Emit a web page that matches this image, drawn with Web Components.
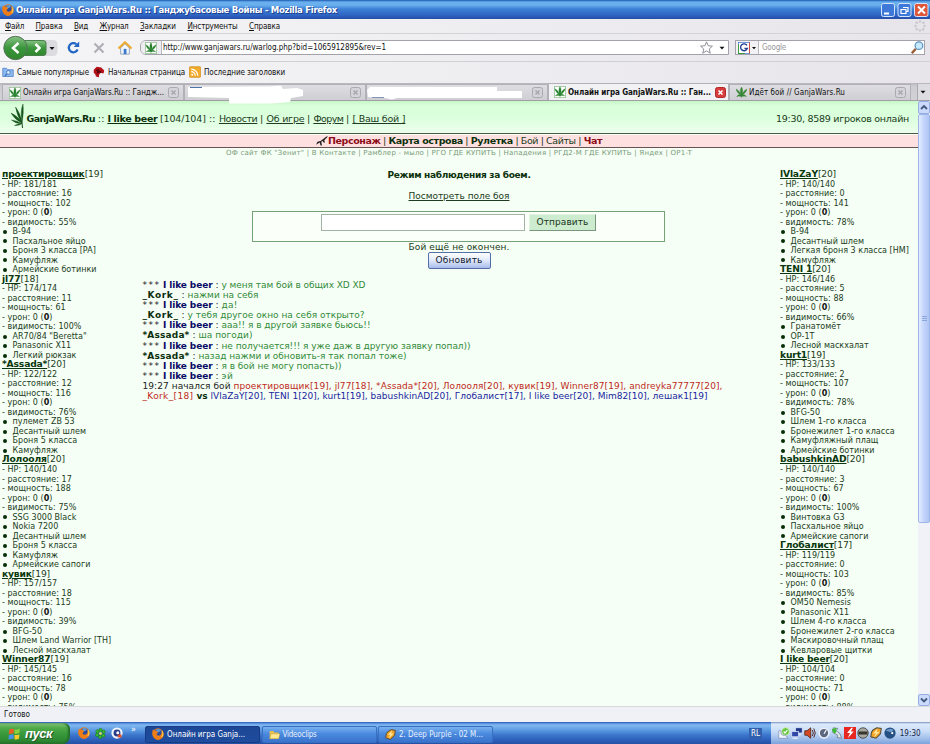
<!DOCTYPE html>
<html lang="ru">
<head>
<meta charset="utf-8">
<title>Онлайн игра GanjaWars.Ru :: Ганджубасовые Войны</title>
<style>
html, body { margin: 0; width: 930px; height: 744px; overflow: hidden; }
body { font-family: "DejaVu Sans Condensed", "DejaVu Sans", sans-serif; font-size: 8px; color: #111; }
</style>
</head>
<body>
<browser-window>
    <title-bar slot="top"></title-bar>
    <menu-bar slot="top"></menu-bar>
    <nav-bar slot="top"></nav-bar>
    <bookmark-bar slot="top"></bookmark-bar>
    <tab-bar slot="top"></tab-bar>
    <game-page></game-page>
    <scroll-bar slot="scroll"></scroll-bar>
    <status-bar slot="bottom">Готово</status-bar>
    <task-bar slot="bottom"></task-bar>
</browser-window>

<script>
const LEAF = '<path d="M8 14C5 13 3 13 1 14C3 11 5 11 7 12C4 10 1 7 0 3C4 5 6 8 7 11C6 7 6 3 8 0C10 3 10 7 9 11C10 8 12 5 16 3C15 7 12 10 9 12C11 11 13 11 15 14C13 13 11 13 8 14V16"/>';

// all on a 16x16 grid
const ICONS = {
    fox: '<circle cx="8" cy="8" r="7.6" fill="#e8791c"/><circle cx="8.6" cy="6.6" r="5" fill="#2b4d9c"/><path d="M6 2Q9 0 12 3L10 5Q7 5 6 7z" fill="#5d9bd8"/><path d="M0.5 6L1 2L4 4Q7 3 8 6L6 8Q7 11 10 10Q13 9 13 4Q16 7 15 11Q12 16 7 15.6Q1 14 .5 6z" fill="#ee7d18"/><path d="M13 4Q16 8 13 12" stroke="#ffd04a" stroke-width="1.4" fill="none"/>',
    favicon: '<rect width="16" height="16" fill="#fff"/><rect x=".5" y=".5" width="15" height="15" fill="none" stroke="#8dbd8d"/><g fill="#24802b" stroke="#24802b" stroke-width=".6" transform="translate(1 1) scale(.87)">' + LEAF + '</g>',
    leaf: '<g fill="#348533" stroke="#348533" stroke-width=".6">' + LEAF + '</g>',
    reload: '<path d="M13 10.5A5.6 5.6 0 1 1 11.5 4" fill="none" stroke="#2166c4" stroke-width="2.8"/><path d="M8.2 7.3H15V.6z" fill="#2166c4"/>',
    stop: '<path d="M2 2L14 14M14 2L2 14" stroke="#aeaeb4" stroke-width="2.8"/>',
    home: '<path d="M3 8V15H13V8L8 3z" fill="#f3f6fb" stroke="#8b9cb4"/><path d="M.5 8.5L8 1.5L15.500 8.5" fill="none" stroke="#eda92c" stroke-width="2.4"/><rect x="6.500" y="9" width="3.2" height="6" fill="#3d79c9"/>',
    star: '<path d="M8 1L10.100 5.900L15.300 6.300L11.400 9.800L12.600 15L8 12.200L3.400 15L4.600 9.800L.7 6.300L5.900 5.900z" fill="#fff" stroke="#8c8c96" stroke-width="1.200"/>',
    google: '<rect x=".5" y=".5" width="15" height="15" fill="#fff" stroke="#4379d4"/><path d="M.5 3V15.500H9" stroke="#3c9a3c" fill="none" stroke-width="1.500"/><path d="M15.500 .5V15" stroke="#d54637" stroke-width="1.500"/><path d="M12 4.600A4.600 4.600 0 1 0 12.400 8.700H8.600" fill="none" stroke="#243e91" stroke-width="1.800"/>',
    lens: '<path d="M1 15L6 9.500" stroke="#9a5d36" stroke-width="3"/><circle cx="9.800" cy="5.700" r="4.700" fill="#c5e8fb" stroke="#5f93c0" stroke-width="1.500"/>',
    popular: '<path d="M1 3H6L8 5H15V14H1z" fill="#8db9ef" stroke="#4a7cc4"/><circle cx="8.500" cy="8.500" r="2.500" fill="#d9ecff" stroke="#3469b7"/><path d="M6.500 10.500L4 13" stroke="#3469b7" stroke-width="1.500"/>',
    dragon: '<path d="M1 5L5 1L11 2L15 6L14 10L10 9L8 12V15L4 14L3 11L1 9z" fill="#b51018"/><path d="M4 6L7 5L6 9L9 7L11 9" fill="none" stroke="#4d0509" stroke-width="1.500"/>',
    rss: '<rect x=".5" y="1" width="15" height="14" rx="1" fill="#f2ac2b" stroke="#d18e18"/><circle cx="4.300" cy="11.600" r="1.300" fill="#fff"/><path d="M3 7.600A5.200 5.200 0 0 1 8.300 13M3 4.200A8.700 8.700 0 0 1 11.700 13" stroke="#fff" fill="none" stroke-width="1.600"/>',
    windows: '<g transform="skewY(-8) translate(0 1.500)"><path d="M1.500 2Q4 .8 7 2V7.500Q4 6.500 1 7.500z" fill="#ee5b27"/><path d="M8 2.500Q11 4 14.500 2.500L14 8Q11 9 8 8z" fill="#8ccf3e"/><path d="M1 8.800Q4 7.700 7 8.800V14Q4 13 .6 14z" fill="#4a90ee"/><path d="M8 9.300Q11 10.500 14 9.300L13.500 15Q10 16 8 14.800z" fill="#fbc72e"/></g>',
    icq: '<g fill="#3bbb2d" stroke="#136c1c" stroke-width=".7"><circle cx="8" cy="3" r="2.500"/><circle cx="12.500" cy="5.500" r="2.500"/><circle cx="12" cy="11" r="2.500"/><circle cx="7.500" cy="13" r="2.500"/><circle cx="3.200" cy="10" r="2.500"/><circle cx="3.600" cy="5" r="2.500"/></g><circle cx="8" cy="8" r="1.800" fill="#f1ea58"/>',
    agent: '<circle cx="8" cy="8" r="7.500" fill="#eef3fc"/><circle cx="8" cy="8" r="4.600" fill="#253d86"/><circle cx="9" cy="7.500" r="2" fill="#fff"/><rect x="9" y="10" width="5" height="4" fill="#db4d2f"/>',
    folder: '<path d="M1 3H6L8 5H14V14H1z" fill="#e8c14c"/><path d="M3 7H16L14 14H1z" fill="#ffe990" stroke="#b58a22" stroke-width=".6"/>',
    winamp: '<path d="M4 4L9 1L15 2L14 9L8 15L1 13L2 7z" fill="#f3a526" stroke="#554a38" stroke-width="1.400"/><path d="M10 2L4 9L8 8L5 14L13 6L9 7z" fill="#ffe9a6"/>',
    user: '<circle cx="10" cy="6" r="5.200" fill="#68c33e" stroke="#e9ffe0"/><path d="M7.500 6L9.500 8L12.500 4" fill="none" stroke="#fff" stroke-width="1.600"/><path d="M1 5H4V9L6 11L10 11L13 15H1z" fill="#f2f6ff" stroke="#61719b" stroke-width=".7"/>',
    network: '<rect x="6" y="1" width="9" height="7" fill="#24388b" stroke="#dfe8fa"/><path d="M8 10H13" stroke="#dfe8fa" stroke-width="2"/><rect x="1" y="6" width="9" height="7" fill="#3049a8" stroke="#dfe8fa"/><path d="M2 15H9" stroke="#dfe8fa" stroke-width="2"/>',
    sound: '<path d="M1 5H4L9 1V15L4 11H1z" fill="#d44a24" stroke="#491d13"/><path d="M11 4Q14 8 11 12M13 2Q17 8 13 14" fill="none" stroke="#482528" stroke-width="1.300"/>',
    dial: '<circle cx="8" cy="8" r="6.500" fill="#5c6780" stroke="#edf1f8" stroke-width="2"/><path d="M8 9L11 4" stroke="#fff" stroke-width="1.600"/>',
    eject: '<path d="M3 1L9 2L7 5L12 9L14 15L8 14L9 11L2 7z" fill="#dfe7e6" stroke="#657583"/><path d="M1 3L7 1L7 7L4 9z" fill="#3ebc34"/>',
    flash: '<rect width="16" height="16" fill="#e62722"/><path d="M10 1L4 8H8L5 15L13 6H9L12 1z" fill="#fff"/>',
    disc: '<circle cx="8" cy="8" r="7" fill="#a9a89f" stroke="#33332f"/><rect x="2" y="6" width="12" height="4" fill="#37352c"/>',
    orb: '<circle cx="8" cy="8" r="7.500" fill="#255083"/><path d="M2 5Q8 0 13 4L10 7z" fill="#6f99c9"/><circle cx="11" cy="8" r="1.500" fill="#fff"/>',
    throbber: '<g fill="#c9c9cd"><circle cx="8" cy="2" r="1.700"/><circle cx="12.500" cy="3.700" r="1.700"/><circle cx="14" cy="8" r="1.700"/><circle cx="12.300" cy="12.500" r="1.700"/><circle cx="8" cy="14" r="1.700"/><circle cx="3.600" cy="12.400" r="1.700"/><circle cx="2" cy="8" r="1.700"/><circle cx="3.600" cy="3.600" r="1.700"/></g>',
    drop: '<path d="M4 6H12L8 10.500z" fill="#111"/>',
    rifle: '<path d="M0 13L2 9L6 8L14 2L16 2L11 7L12 10L10 10L9 8L7 9L8 14L6 14L5 10z" fill="#222"/>'
};

class UiIcon extends HTMLElement {
    connectedCallback() {
        const size = this.getAttribute('size') || 12;
        const shadow = this.attachShadow({ mode: 'open' });
        shadow.innerHTML = `<style>
        :host { display: block; flex: none; width: ${size}px; height: ${size}px; }
        svg { display: block; }
        </style>
        <svg width="${size}" height="${size}" viewBox="0 0 16 16">${ICONS[this.getAttribute('name')]}</svg>`;
    }
}

class BrowserWindow extends HTMLElement {
    connectedCallback() {
        this.attachShadow({ mode: 'open' }).innerHTML = `<style>
        :host { display: flex; flex-direction: column; width: 930px; height: 744px; }
        .view { display: flex; flex: 1; min-height: 0; }
        </style>
        <slot name="top"></slot>
        <div class="view"><slot></slot><slot name="scroll"></slot></div>
        <slot name="bottom"></slot>`;
    }
}

class TitleBar extends HTMLElement {
    connectedCallback() {
        this.attachShadow({ mode: 'open' }).innerHTML = `<style>
        :host { display: flex; align-items: center; height: 19px; box-sizing: border-box; padding: 0 1px 0 2px; gap: 2px;
            background: linear-gradient(#1d58b0 0, #69b0ef 2px, #6bb0ee 5px, #3c80d6 9px, #2f65c4 15px, #254da7); color: #fff;
            font-size: 9.5px; font-weight: bold; text-shadow: 1px 1px #1c3d8c; }
        .space { flex: 1; }
        svg { display: block; }
        </style>
        <ui-icon name="fox" size="12"></ui-icon>
        <fit-text w="321">Онлайн игра GanjaWars.Ru :: Ганджубасовые Войны - Mozilla Firefox</fit-text>
        <div class="space"></div>
        <svg width="48" height="16">
            <g stroke="#d5e4fb"><rect x=".5" y="1.500" width="13" height="13" rx="2" fill="#3e79da"/><rect x="17" y="1.500" width="13" height="13" rx="2" fill="#3e79da"/><rect x="33.500" y="1.500" width="13.500" height="13" rx="2" fill="#df5638"/></g>
            <path d="M3 11.500H8" stroke="#fff" stroke-width="2"/>
            <path d="M22 5.500H27V9.500H25M20 7.500H25V11.500H20z" fill="none" stroke="#fff" stroke-width="1.200"/>
            <path d="M37 4.500L44 11.500M44 4.500L37 11.500" stroke="#fff" stroke-width="1.900"/>
        </svg>`;
    }
}

class MenuBar extends HTMLElement {
    connectedCallback() {
        const items = [['Файл', 19], ['Правка', 27], ['Вид', 14], ['Журнал', 29], ['Закладки', 36], ['Инструменты', 50], ['Справка', 31]];
        this.attachShadow({ mode: 'open' }).innerHTML = `<style>
        :host { display: flex; align-items: center; gap: 11.5px; height: 15px; box-sizing: border-box; padding: 0 4px 0 5px;
            background: linear-gradient(90deg, #f5f5f7, #e7e5ea); border-bottom: 1px solid #d4d3d8; }
        u { text-decoration-thickness: 1px; text-underline-offset: 1px; }
        .space { flex: 1; }
        </style>
        ${items.map(([t, w]) => `<fit-text w="${w}"><u>${t[0]}</u>${t.slice(1)}</fit-text>`).join('')}
        <div class="space"></div><ui-icon name="throbber" size="12"></ui-icon>`;
    }
}

class NavBar extends HTMLElement {
    connectedCallback() {
        this.attachShadow({ mode: 'open' }).innerHTML = `<style>
        :host { display: flex; align-items: center; height: 28px; box-sizing: border-box; padding: 0 5px 0 3px;
            background: linear-gradient(90deg, #f5f5f7, #e7e5ea); border-bottom: 1px solid #d0cfd4; }
        .arrows { display: block; flex: none; margin-right: 9px; }
        .field { display: flex; align-items: center; height: 15px; box-sizing: border-box; background: #fff; border: 1px solid #a3a2aa; }
        .url { width: 589px; border-radius: 6px 0 0 6px; margin-left: 8px; margin-right: 6px; overflow: hidden; }
        .site { display: flex; align-items: center; height: 13px; padding: 0 4px; margin-right: 1px; background: #ececf1; border-right: 1px solid #b9b8c0; }
        .search { width: 190px; color: #999; }
        .engine { display: flex; align-items: center; height: 13px; width: 20px; padding-left: 2px; margin-right: 3px; border-right: 1px solid #b9b8c0; background: #f2f2f5; }
        .space { flex: 1; }
        ui-icon + ui-icon.gap { margin-left: 13px; }
        </style>
        <svg class="arrows" width="55" height="26">
            <defs><linearGradient id="g" x2="0" y2="1"><stop stop-color="#87c284"/><stop offset=".5" stop-color="#3a953c"/><stop offset="1" stop-color="#31872d"/></linearGradient></defs>
            <path d="M12 5H50Q54.500 5 54.500 10V16Q54.500 21 50 21H12z" fill="#dcdbe0"/>
            <path d="M20 5.500H40Q43 5.500 43 8V18Q43 20.500 40 20.500H20z" fill="url(#g)" stroke="#46804a"/>
            <circle cx="12.500" cy="13" r="11.700" fill="url(#g)" stroke="#55735a"/>
            <path d="M15.500 8L10 13L15.500 18M32.500 9L36.500 13L32.500 17" fill="none" stroke="#fff" stroke-width="2.500"/>
            <path d="M46.500 12H51.500L49 15z" fill="#111"/>
        </svg>
        <ui-icon name="reload" size="13"></ui-icon>
        <ui-icon class="gap" name="stop" size="12"></ui-icon>
        <ui-icon class="gap" name="home" size="14"></ui-icon>
        <div class="field url">
            <div class="site"><ui-icon name="favicon" size="12"></ui-icon></div>
            <fit-text w="223">http://www.ganjawars.ru/warlog.php?bid=1065912895&amp;rev=1</fit-text>
            <div class="space"></div>
            <ui-icon name="star" size="13"></ui-icon>
            <ui-icon name="drop" size="10" style="margin-left:4px;margin-right:1px"></ui-icon>
        </div>
        <div class="field search">
            <div class="engine"><ui-icon name="google" size="12"></ui-icon><ui-icon name="drop" size="8"></ui-icon></div>
            <fit-text w="24">Google</fit-text>
            <div class="space"></div>
            <ui-icon name="lens" size="13"></ui-icon>
        </div>`;
    }
}

class BookmarkBar extends HTMLElement {
    connectedCallback() {
        const items = [['popular', 'Самые популярные', 72], ['dragon', 'Начальная страница', 77], ['rss', 'Последние заголовки', 81]];
        this.attachShadow({ mode: 'open' }).innerHTML = `<style>
        :host { display: flex; align-items: center; gap: 4px; height: 21px; box-sizing: border-box; padding: 0 2px 1px;
            background: linear-gradient(90deg, #f5f5f7, #e7e5ea); }
        div { display: flex; align-items: center; gap: 3px; }
        </style>
        ${items.map(([icon, t, w]) => `<div><ui-icon name="${icon}" size="12"></ui-icon><fit-text w="${w}">${t}</fit-text></div>`).join('')}`;
    }
}

class BrowserTab extends HTMLElement {
    connectedCallback() {
        const active = this.hasAttribute('active');
        this.attachShadow({ mode: 'open' }).innerHTML = `<style>
        :host { display: flex; align-items: center; gap: 2px; flex: none; width: 182px; height: 16px; box-sizing: border-box;
            padding: 0 4px 0 6px; background: linear-gradient(#dedde1, #cfced3); border: 1px solid #b2b1b8; border-bottom: 0; }
        :host([active]) { width: 181px; height: 17px; background: #f2f2f5; font-weight: bold; padding: 0 4px 0 5px; }
        .space { flex: 1; }
        .close { display: block; flex: none; }
        </style>
        <slot></slot><div class="space"></div>
        <svg class="close" width="11" height="11"><rect x=".5" y=".5" width="10" height="10" rx="2" fill="${active ? '#d83c3c' : '#d5d4d9'}" stroke="${active ? '#ae2929' : '#aaa9b0'}"/>
        <path d="M3.500 3.500L7.500 7.500M7.500 3.500L3.500 7.500" stroke="${active ? '#fff' : '#aaa9b0'}" stroke-width="1.600"/></svg>`;
    }
}

class TabBar extends HTMLElement {
    connectedCallback() {
        this.attachShadow({ mode: 'open' }).innerHTML = `<style>
        :host { display: flex; align-items: flex-end; height: 18px; position: relative; z-index: 1; box-sizing: border-box; padding-left: 2px;
            background: linear-gradient(#b5b4ba, #cdccd1 3px, #d2d1d6 16px); border-bottom: 1px solid #a09fa6; }
        .blot { display: block; flex: none; overflow: visible; width: 1px; height: 16px; }
        .more { display: flex; align-items: center; width: 12px; height: 16px; margin-left: auto; border-left: 1px solid #aaa9b0; background: #dddce1; }
        </style>
        <browser-tab><ui-icon name="favicon" size="12"></ui-icon><fit-text w="141">Онлайн игра GanjaWars.Ru :: Гандж...</fit-text></browser-tab>
        <browser-tab><svg class="blot"><path d="M-3 2L78 1.500L90 .5L92 4L106 3L109 4L112 5V11L100 13L99 17L80 18.500H38V13L-3 12z" fill="#fff"/><path d="M-1 2.500H11" stroke="#4a73a8"/></svg></browser-tab>
        <browser-tab><svg class="blot"><path d="M-6 5L-3 2H124V6H149V13H24L19 14.500L12 13L-5 12z" fill="#fff"/><path d="M-1 12.500H11" stroke="#8295b5"/></svg></browser-tab>
        <browser-tab active><ui-icon name="favicon" size="12"></ui-icon><fit-text w="143">Онлайн игра GanjaWars.Ru :: Ган...</fit-text></browser-tab>
        <browser-tab><ui-icon name="leaf" size="11"></ui-icon><fit-text w="96">Идёт бой // GanjaWars.Ru</fit-text></browser-tab>
        <div class="more"><ui-icon name="drop" size="10"></ui-icon></div>`;
    }
}

class FighterCard extends HTMLElement {
    set data([name, level, hp, dist, power, view, ...gear]) {
        this.attachShadow({ mode: 'open' }).innerHTML = `<style>
        :host { display: block; line-height: 9.52px; white-space: nowrap; font-size: 8px; color: #223c22; letter-spacing: .03px; }
        div { height: 9.52px; }
        .name { font-size: 9.2px; line-height: 8.5px; letter-spacing: -.18px; }
        u { font-weight: bold; color: #0a370d; text-underline-offset: 1px; text-decoration-thickness: 1px; }
        b { color: #111; }
        .item { display: flex; align-items: center; gap: 6px; }
        .item::before { content: ""; width: 4px; height: 4px; margin-left: .5px; border-radius: 50%; background: #072e08; }
        </style>
        <div class="name"><u>${name}</u>[${level}]</div>
        <div>- HP: ${hp}/${hp}</div>
        <div>- расстояние: ${dist}</div>
        <div>- мощность: ${power}</div>
        <div>- урон: 0 (<b>0</b>)</div>
        <div>- видимость: ${view}%</div>
        ${gear.map(g => `<div class="item">${g}</div>`).join('')}`;
    }
}

const LEFT = [
    ['проектировщик', 19, 181, 16, 102, 55, 'B-94', 'Пасхальное яйцо', 'Броня 3 класса [PA]', 'Камуфляж', 'Армейские ботинки'],
    ['jl77', 18, 174, 11, 61, 100, 'AR70/84 "Beretta"', 'Panasonic X11', 'Легкий рюкзак'],
    ['*Assada*', 20, 122, 12, 116, 76, 'пулемет ZB 53', 'Десантный шлем', 'Броня 5 класса', 'Камуфляж'],
    ['Лолооля', 20, 140, 17, 188, 75, 'SSG 3000 Black', 'Nokia 7200', 'Десантный шлем', 'Броня 5 класса', 'Камуфляж', 'Армейские сапоги'],
    ['кувик', 19, 157, 18, 115, 39, 'BFG-50', 'Шлем Land Warrior [TH]', 'Лесной маскхалат'],
    ['Winner87', 19, 145, 16, 78, 75]
];
const RIGHT = [
    ['lVlaZaY', 20, 140, 0, 141, 78, 'B-94', 'Десантный шлем', 'Легкая броня 3 класса [HM]', 'Камуфляж'],
    ['TENI 1', 20, 146, 5, 88, 66, 'Гранатомёт', 'OP-1T', 'Лесной маскхалат'],
    ['kurt1', 19, 133, 2, 107, 78, 'BFG-50', 'Шлем 1-го класса', 'Бронежилет 1-го класса', 'Камуфляжный плащ', 'Армейские ботинки'],
    ['babushkinAD', 20, 140, 3, 67, 100, 'Винтовка G3', 'Пасхальное яйцо', 'Армейские сапоги'],
    ['Глобалист', 17, 119, 0, 103, 85, 'OM50 Nemesis', 'Panasonic X11', 'Шлем 4-го класса', 'Бронежилет 2-го класса', 'Маскировочный плащ', 'Кевларовые щитки'],
    ['I like beer', 20, 104, 0, 71, 88]
];

class FighterTeam extends HTMLElement {
    connectedCallback() {
        const shadow = this.attachShadow({ mode: 'open' });
        shadow.innerHTML = '<style>:host { display: block; flex: none; }</style>';
        for (const f of this.getAttribute('side') === 'left' ? LEFT : RIGHT) {
            const card = document.createElement('fighter-card');
            card.data = f;
            shadow.append(card);
        }
    }
}

// [who, width of the message, message]
const CHAT = [
    ['beer', 144, 'у меня там бой в общих XD XD'],
    ['kork', 71, 'нажми на себя'],
    ['beer', 16, 'да!'],
    ['kork', 177, 'у тебя другое окно на себя открыто?'],
    ['beer', 149, 'ааа!! я в другой заявке бьюсь!!'],
    ['assada', 54, 'ша погоди)'],
    ['beer', 249, 'не получается!!! я уже даж в другую заявку попал))'],
    ['assada', 208, 'назад нажми и обновить-я так попал тоже)'],
    ['beer', 120, 'я в бой не могу попасть))'],
    ['beer', 12, 'эй']
];
const WHO = {
    beer: '<fit-text w="18">***</fit-text><fit-text w="49.500" style="margin-left:2.500px"><b class="me">I like beer</b></fit-text>',
    kork: '<fit-text w="36"><b>_Kork_</b></fit-text>',
    assada: '<fit-text w="47"><b>*Assada*</b></fit-text>'
};

class BattleLog extends HTMLElement {
    connectedCallback() {
        this.attachShadow({ mode: 'open' }).innerHTML = `<style>
        :host { display: block; line-height: 10.18px; font-size: 9px; color: #222; white-space: nowrap; }
        div { display: flex; height: 10.18px; }
        b { color: #0c300f; }
        b.me { color: #0b0b66; }
        .say { color: #338a3a; }
        .colon { width: 6px; margin-left: 3px; }
        .red { color: #c02a22; }
        .blue { color: #1a1ea0; }
        </style>
        ${CHAT.map(([who, w, t]) => `<div>${WHO[who]}<span class="colon">:</span><fit-text class="say" w="${w}">${t}</fit-text></div>`).join('')}
        <div><fit-text w="91">19:27 начался бой&nbsp;</fit-text><fit-text class="red" w="489">проектировщик[19], jl77[18], *Assada*[20], Лолооля[20], кувик[19], Winner87[19], andreyka77777[20],</fit-text></div>
        <div><fit-text class="red" w="51">_Kork_[18]</fit-text><fit-text w="11" style="margin:0 3px"><b>vs</b></fit-text><fit-text class="blue" w="497">lVlaZaY[20], TENI 1[20], kurt1[19], babushkinAD[20], Глобалист[17], I like beer[20], Mim82[10], лешак1[19]</fit-text></div>`;
    }
}

class GamePage extends HTMLElement {
    connectedCallback() {
        this.attachShadow({ mode: 'open' }).innerHTML = `<style>
        :host { display: block; flex: 1; min-width: 0; overflow: hidden; background: #f5fff5; color: #203b20;
            font-family: "DejaVu Sans", sans-serif; font-size: 9px; line-height: 12px; }
        header { display: flex; align-items: center; height: 32px; box-sizing: content-box; padding: 0 9px 0 10px; background: linear-gradient(#c8f5c8, #dcffdc 5px, #d9ffdb 14px, #ecffec); border-bottom: 1px solid #4c5a45; }
        header svg { display: block; flex: none; margin-top: -2px; }
        header fit-text { padding-top: 4px; }
        header .space { flex: 1; }
        header, nav { font-size: 9.5px; }
        u { text-underline-offset: 1px; text-decoration-thickness: 1px; }
        b { color: #0b300c; }
        nav { display: flex; align-items: center; justify-content: center; height: 12px; margin-top: 1px; background: #ffe0e0; border-bottom: 1px solid #675450; }
        b.red { color: #8c0c18; }
        .ads { display: flex; justify-content: center; font-size: 7px; line-height: 11px; color: #7a9a7a; }
        .cols { display: flex; margin-top: 11px; }
        .cols fighter-team { width: 140px; padding-left: 2px; box-sizing: content-box; }
        .cols fighter-team:last-child { width: 138px; padding-left: 4px; }
        main { display: flex; flex-direction: column; align-items: center; width: 634px; flex: none; }
        form { display: flex; justify-content: center; gap: 4px; width: 413px; height: 31px; box-sizing: border-box; padding-top: 2px; margin: 9px 1px 0 0; background: #fafffa; border: 1px solid #76a277; }
        .box { width: 204px; height: 17px; box-sizing: border-box; background: #fff; border: 1px solid #a2b3a4; }
        button { font: inherit; display: flex; align-items: center; justify-content: center; padding: 0; box-sizing: border-box; color: #17331a; }
        .send { width: 67px; height: 17px; background: #cdebce; border: 1px solid; border-color: #e0f5e0 #7b967d #7b967d #e0f5e0; }
        .refresh { width: 63px; height: 17px; background: linear-gradient(#fff, #dfe8fb 50%, #a9bdec); border: 1px solid #526fa7; border-radius: 2px; color: #10182c; }
        battle-log { align-self: flex-start; margin-top: 11px; padding-left: .5px; }
        </style>
        <header>
            <svg width="14" height="26" viewBox="0 0 14 26"><g fill="#155a1c" stroke="#124b17" stroke-width=".4"><path d="M13 1Q10 8 12 20Q14 9 13 1zM5.500 4Q7 13 12 20Q10.500 10 5.500 4zM1 10Q5 17 12 20Q8 13 1 10zM1.500 17Q6 21 12 20.500Q7 17.500 1.500 17zM4.500 22.500Q9 23 12 20.500Q8 20.500 4.500 22.500z"/></g><path d="M12 20L12.500 25" stroke="#124b17"/></svg>
            <fit-text w="68.500" style="margin-left:2.500px"><b>GanjaWars.Ru</b></fit-text>
            <fit-text w="7" style="margin:0 2.700px">::</fit-text>
            <fit-text w="50"><b><u>I like beer</u></b></fit-text>
            <fit-text w="46" style="margin:0 3px 0 2.500px">[104/104]</fit-text>
            <fit-text w="7" style="margin-right:3px">::</fit-text>
            <fit-text w="38.500"><u>Новости</u></fit-text>
            <fit-text w="4" style="margin:0 2.500px">|</fit-text>
            <fit-text w="38"><u>Об игре</u></fit-text>
            <fit-text w="4" style="margin:0 2.500px">|</fit-text>
            <fit-text w="30"><u>Форум</u></fit-text>
            <fit-text w="4" style="margin:0 2.500px">|</fit-text>
            <fit-text w="53"><u>[ Ваш бой ]</u></fit-text>
            <div class="space"></div>
            <fit-text w="133">19:30, 8589 игроков онлайн</fit-text>
        </header>
        <nav>
            <ui-icon name="rifle" size="12"></ui-icon>
            <fit-text w="274"><b class="red">Персонаж</b> | <b>Карта острова</b> | <b>Рулетка</b> | Бой | Сайты | <b class="red">Чат</b></fit-text>
        </nav>
        <div class="ads"><fit-text w="466">ОФ сайт ФК "Зенит" | В Контакте | Рамблер - мыло | РГО ГДЕ КУПИТЬ | Нападения | РГД2-М ГДЕ КУПИТЬ | Яндех | OP1-T</fit-text></div>
        <div class="cols">
            <fighter-team side="left"></fighter-team>
            <main>
                <fit-text w="143" style="margin-top:-1px"><b>Режим наблюдения за боем.</b></fit-text>
                <fit-text w="101" style="margin-top:8.500px"><u>Посмотреть поле боя</u></fit-text>
                <form><div class="box"></div><button class="send" type="button"><fit-text w="52">Отправить</fit-text></button></form>
                <fit-text w="101" style="line-height:10px">Бой ещё не окончен.</fit-text>
                <button class="refresh"><fit-text w="47">Обновить</fit-text></button>
                <battle-log></battle-log>
            </main>
            <fighter-team side="right"></fighter-team>
        </div>`;
    }
}

class ScrollBar extends HTMLElement {
    connectedCallback() {
        this.attachShadow({ mode: 'open' }).innerHTML = `<style>
        :host { display: flex; flex-direction: column; width: 12px; background: #f1f2f8; }
        svg { display: block; }
        .thumb { height: 409px; box-sizing: border-box; border: 1px solid #9fb7e8; border-radius: 2px; background: linear-gradient(90deg, #e3ecff, #c3d4fb 50%, #b0c5f4);
            display: flex; align-items: center; justify-content: center; }
        .thumb i { width: 5px; height: 6px; background: repeating-linear-gradient(#8ba6db 0 1px, transparent 1px 2px); }
        .space { flex: 1; }
        </style>
        <svg width="12" height="13"><rect x=".5" y=".5" width="11" height="12" rx="1.500" fill="#cbdafb" stroke="#96aee2"/><path d="M3 8L6 5L9 8" fill="none" stroke="#41577e" stroke-width="1.800"/></svg>
        <div class="thumb"><i></i></div><div class="space"></div>
        <svg width="12" height="12"><rect x=".5" y=".5" width="11" height="11" rx="1.500" fill="#cbdafb" stroke="#96aee2"/><path d="M3 4.500L6 7.500L9 4.500" fill="none" stroke="#41577e" stroke-width="1.800"/></svg>`;
    }
}

class StatusBar extends HTMLElement {
    connectedCallback() {
        this.attachShadow({ mode: 'open' }).innerHTML = `<style>
        :host { display: flex; align-items: center; height: 16px; box-sizing: border-box; padding-left: 4px; background: #eff1f6; border-top: 1px solid #d7dad9; }
        </style>
        <fit-text w="26"><slot></slot></fit-text>`;
    }
}

class TaskBar extends HTMLElement {
    connectedCallback() {
        const tray = ['user', 'network', 'sound', 'dial', 'eject', 'flash', 'disc', 'winamp', 'orb'];
        this.attachShadow({ mode: 'open' }).innerHTML = `<style>
        :host { display: flex; align-items: center; height: 22px; color: #fff;
            background: linear-gradient(#27509f 0, #4a86dc 1px, #82b8ef 3px, #5c9be2 8px, #3b76cc 13px, #2d5fba 18px, #2450a3); }
        .start { display: flex; align-items: center; gap: 4px; width: 70px; height: 21px; margin-top: 1px; box-sizing: border-box; padding-left: 8px; border-radius: 0 6px 8px 0;
            background: linear-gradient(#87c47c, #4ea948 5px, #36963a 12px, #2f8a33 17px, #25732a); box-shadow: inset -2px 0 2px #236c2c;
            font: italic bold 13px "Liberation Sans", sans-serif; text-shadow: 1px 1px #24582a; }
        .quick { display: flex; gap: 5px; align-items: center; width: 75px; padding-left: 8px; box-sizing: border-box; }
        .chev { font-size: 9px; line-height: 9px; margin: -8px 0 0 3px; }
        .task { display: flex; align-items: center; gap: 3px; width: 115px; height: 17px; margin-top: 2px; margin-right: 1.500px; box-sizing: border-box; padding-left: 6px;
            border: 1px solid #386fc0; border-radius: 2px; background: linear-gradient(#79b2ef, #4a8ade 45%, #3a73cd); color: #e7f0ff; }
        .on { background: linear-gradient(#1d4796, #1f4c9e); border-color: #173b82; color: #fff; }
        .space { flex: 1; }
        .lang { width: 13px; height: 11px; margin-right: 9px; display: flex; align-items: center; justify-content: center; background: #3060ae; }
        .tray { display: flex; align-items: center; gap: 1.200px; width: 159px; height: 22px; box-sizing: border-box; padding-left: 7px; color: #172345;
            background: linear-gradient(#7890bd 0, #dceafb 2px, #cbdef6 9px, #a4c1eb 16px, #7da3dc); }
        .clock { margin-left: 3px; }
        </style>
        <div class="start"><ui-icon name="windows" size="13"></ui-icon><fit-text w="27">пуск</fit-text></div>
        <div class="quick"><ui-icon name="fox" size="12"></ui-icon><ui-icon name="icq" size="11"></ui-icon><ui-icon name="agent" size="12"></ui-icon><span class="chev">»</span></div>
        <div class="task on"><ui-icon name="fox" size="12"></ui-icon><fit-text w="78">Онлайн игра Ganja...</fit-text></div>
        <div class="task"><ui-icon name="folder" size="11"></ui-icon><fit-text w="34">Videoclips</fit-text></div>
        <div class="task"><ui-icon name="winamp" size="11"></ui-icon><fit-text w="84">2. Deep Purple - 02 M...</fit-text></div>
        <div class="space"></div>
        <div class="lang"><fit-text w="9">RL</fit-text></div>
        <div class="tray">${tray.map(n => `<ui-icon name="${n}" size="12"></ui-icon>`).join('')}<fit-text class="clock" w="21">19:30</fit-text></div>`;
    }
}

// spreads its text over exactly "w" pixels with letter-spacing
class FitText extends HTMLElement {
    connectedCallback() {
        const w = parseFloat(this.getAttribute('w'));
        this.attachShadow({ mode: 'open' }).innerHTML = `<style>
        :host { display: block; flex: none; width: ${w}px; white-space: nowrap; }
        span { display: inline-block; }
        </style><span><slot></slot></span>`;
        const span = this.shadowRoot.querySelector('span');
        const slot = this.shadowRoot.querySelector('slot');
        const text = slot.assignedNodes({ flatten: true }).map(n => n.textContent).join('');
        span.style.letterSpacing = (w - span.getBoundingClientRect().width) / text.length + 'px';
    }
}

customElements.define('browser-window', BrowserWindow);
customElements.define('title-bar', TitleBar);
customElements.define('menu-bar', MenuBar);
customElements.define('nav-bar', NavBar);
customElements.define('bookmark-bar', BookmarkBar);
customElements.define('tab-bar', TabBar);
customElements.define('browser-tab', BrowserTab);
customElements.define('fighter-card', FighterCard);
customElements.define('fighter-team', FighterTeam);
customElements.define('battle-log', BattleLog);
customElements.define('game-page', GamePage);
customElements.define('scroll-bar', ScrollBar);
customElements.define('status-bar', StatusBar);
customElements.define('task-bar', TaskBar);
customElements.define('ui-icon', UiIcon);
// last, so that everything round the texts is already styled when they are measured
customElements.define('fit-text', FitText);
</script>
</body>
</html>
